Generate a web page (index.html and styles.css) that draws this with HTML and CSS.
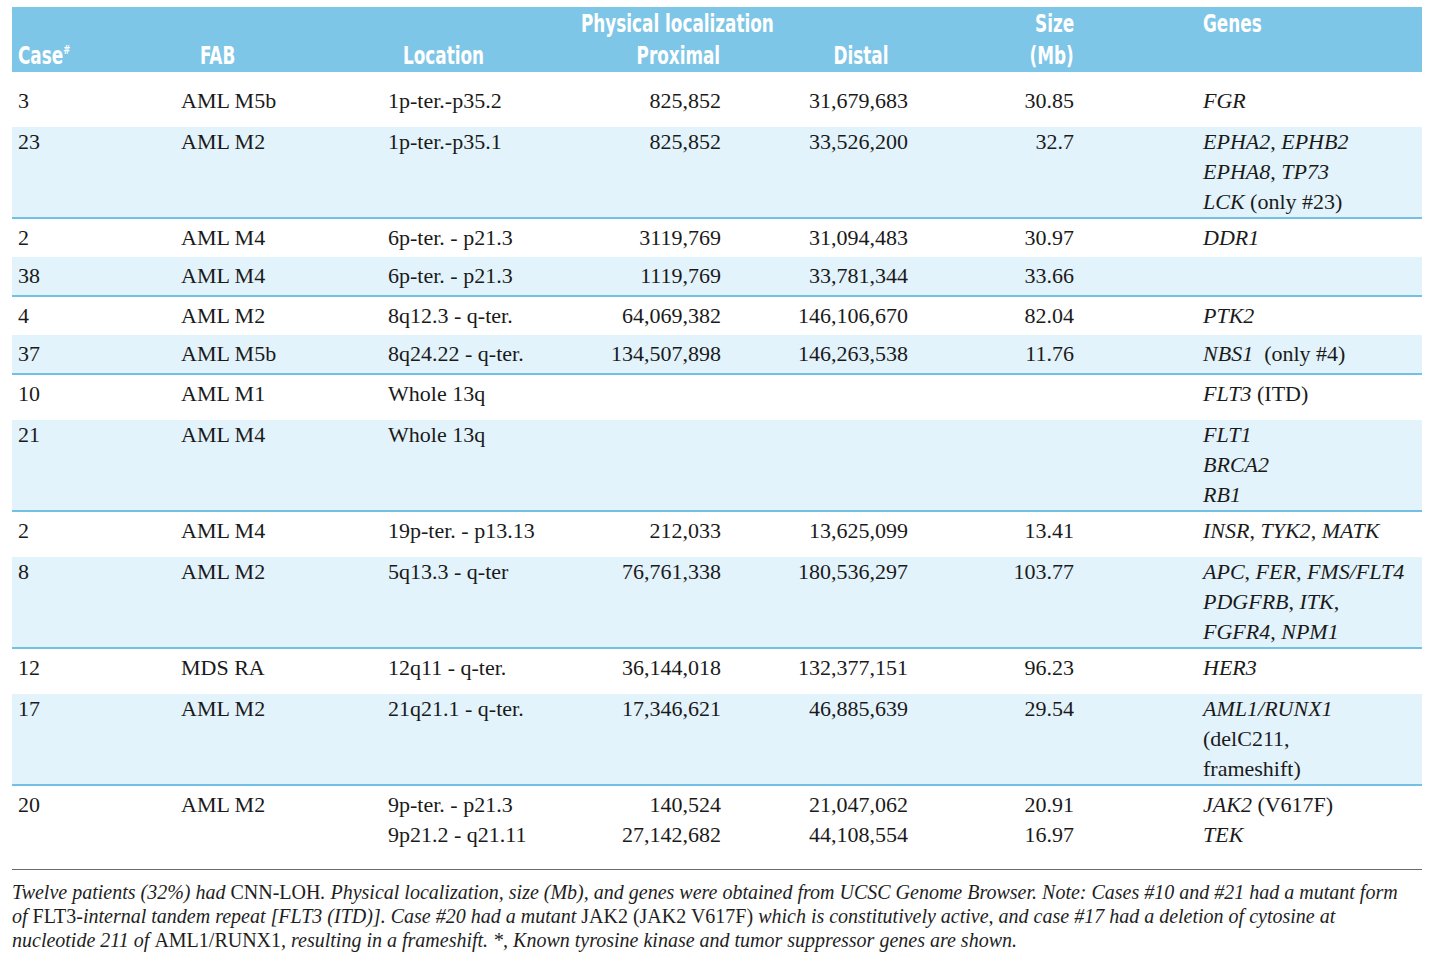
FILE: index.html
```html
<!DOCTYPE html>
<html lang="en">
<head>
<meta charset="utf-8">
<title>CNN-LOH table</title>
<link rel="stylesheet" href="styles.css">
</head>
<body>
<div class="page">
<table class="data">
  <colgroup>
    <col class="c-case"><col class="c-fab"><col class="c-loc"><col class="c-prox"><col class="c-dist"><col class="c-size"><col class="c-genes">
  </colgroup>
  <thead>
    <tr class="h1">
      <th></th><th></th><th></th>
      <th colspan="2" class="h-phys"><span class="nl">Physical localization</span></th>
      <th class="h-num"><span class="nr">Size</span></th>
      <th class="h-genes"><span class="nl">Genes</span></th>
    </tr>
    <tr class="h2">
      <th class="h-case"><span class="nl">Case<sup>#</sup></span></th>
      <th class="h-fab"><span class="nl">FAB</span></th>
      <th class="h-loc"><span class="nl">Location</span></th>
      <th class="h-prox"><span class="nr">Proximal</span></th>
      <th class="h-dist"><span class="nr">Distal</span></th>
      <th class="h-num"><span class="nr">(Mb)</span></th>
      <th></th>
    </tr>
  </thead>
  <tbody>
    <tr class="first">
      <td>3</td><td>AML M5b</td><td>1p-ter.-p35.2</td><td class="num">825,852</td><td class="num">31,679,683</td><td class="num">30.85</td><td class="genes"><i>FGR</i></td>
    </tr>
    <tr class="alt tight">
      <td>23</td><td>AML M2</td><td>1p-ter.-p35.1</td><td class="num">825,852</td><td class="num">33,526,200</td><td class="num">32.7</td><td class="genes"><i>EPHA2</i>, <i>EPHB2</i><br><i>EPHA8</i>, <i>TP73</i><br><i>LCK</i> (only #23)</td>
    </tr>
    <tr class="grp">
      <td>2</td><td>AML M4</td><td>6p-ter. - p21.3</td><td class="num">3119,769</td><td class="num">31,094,483</td><td class="num">30.97</td><td class="genes"><i>DDR1</i></td>
    </tr>
    <tr class="alt">
      <td>38</td><td>AML M4</td><td>6p-ter. - p21.3</td><td class="num">1119,769</td><td class="num">33,781,344</td><td class="num">33.66</td><td class="genes"></td>
    </tr>
    <tr class="grp">
      <td>4</td><td>AML M2</td><td>8q12.3 - q-ter.</td><td class="num">64,069,382</td><td class="num">146,106,670</td><td class="num">82.04</td><td class="genes"><i>PTK2</i></td>
    </tr>
    <tr class="alt">
      <td>37</td><td>AML M5b</td><td>8q24.22 - q-ter.</td><td class="num">134,507,898</td><td class="num">146,263,538</td><td class="num">11.76</td><td class="genes"><i>NBS1</i> &nbsp;(only #4)</td>
    </tr>
    <tr class="grp pre">
      <td>10</td><td>AML M1</td><td>Whole 13q</td><td class="num"></td><td class="num"></td><td class="num"></td><td class="genes"><i>FLT3</i> (ITD)</td>
    </tr>
    <tr class="alt tight">
      <td>21</td><td>AML M4</td><td>Whole 13q</td><td class="num"></td><td class="num"></td><td class="num"></td><td class="genes"><i>FLT1</i><br><i>BRCA2</i><br><i>RB1</i></td>
    </tr>
    <tr class="grp pre">
      <td>2</td><td>AML M4</td><td>19p-ter. - p13.13</td><td class="num">212,033</td><td class="num">13,625,099</td><td class="num">13.41</td><td class="genes"><i>INSR</i>, <i>TYK2</i>, <i>MATK</i></td>
    </tr>
    <tr class="alt tight">
      <td>8</td><td>AML M2</td><td>5q13.3 - q-ter</td><td class="num">76,761,338</td><td class="num">180,536,297</td><td class="num">103.77</td><td class="genes"><i>APC</i>, <i>FER</i>, <i>FMS/FLT4</i><br><i>PDGFRB</i>, <i>ITK</i>,<br><i>FGFR4</i>, <i>NPM1</i></td>
    </tr>
    <tr class="grp pre">
      <td>12</td><td>MDS RA</td><td>12q11 - q-ter.</td><td class="num">36,144,018</td><td class="num">132,377,151</td><td class="num">96.23</td><td class="genes"><i>HER3</i></td>
    </tr>
    <tr class="alt tight">
      <td>17</td><td>AML M2</td><td>21q21.1 - q-ter.</td><td class="num">17,346,621</td><td class="num">46,885,639</td><td class="num">29.54</td><td class="genes"><i>AML1/RUNX1</i><br>(delC211,<br>frameshift)</td>
    </tr>
    <tr class="grp last">
      <td>20</td><td>AML M2</td><td>9p-ter. - p21.3<br>9p21.2 - q21.11</td><td class="num">140,524<br>27,142,682</td><td class="num">21,047,062<br>44,108,554</td><td class="num">20.91<br>16.97</td><td class="genes"><i>JAK2</i> (V617F)<br><i>TEK</i></td>
    </tr>
  </tbody>
</table>
<p class="note">Twelve patients (32%) had <span class="up">CNN-LOH</span>. Physical localization, size (Mb), and genes were obtained from UCSC Genome Browser. Note: Cases #10 and #21 had a mutant form<br>of <span class="up">FLT3</span>-internal tandem repeat [FLT3 (ITD)]. Case #20 had a mutant <span class="up">JAK2 (JAK2 V617F)</span> which is constitutively active, and case #17 had a deletion of cytosine at<br>nucleotide 211 of <span class="up">AML1/RUNX1</span>, resulting in a frameshift. *, Known tyrosine kinase and tumor suppressor genes are shown.</p>
</div>
</body>
</html>
```

FILE: styles.css
```css
html, body {
  margin: 0;
  padding: 0;
  background: #ffffff;
}

.page {
  padding: 7px 18px 0 12px;
  width: 1410px;
}

.data {
  width: 1410px;
  border-collapse: collapse;
  table-layout: fixed;
  font-family: "Liberation Serif", "Times New Roman", serif;
  font-size: 22px;
  color: #1a1a1a;
}

.c-case { width: 163px; }
.c-fab { width: 207px; }
.c-loc { width: 178px; }
.c-prox { width: 167px; }
.c-dist { width: 187px; }
.c-size { width: 166px; }
.c-genes { width: 342px; }

thead tr {
  background: #7ec6e7;
}

thead th {
  font-family: "DejaVu Sans Condensed", "Liberation Sans Narrow", "Liberation Sans", sans-serif;
  font-weight: bold;
  font-size: 24px;
  color: #ffffff;
  line-height: 32px;
  height: 32px;
  padding: 0;
  text-align: left;
  white-space: nowrap;
  vertical-align: middle;
}

thead th .nl,
thead th .nr {
  display: inline-block;
  transform: scaleX(0.78);
}

thead th .nl { transform-origin: left center; }
thead th .nr { transform-origin: right center; }

.h1 th { padding-top: 1px; }

.h-case { padding-left: 6px; }
.h-case sup {
  font-size: 12px;
  vertical-align: 10px;
  line-height: 0;
}
.h-fab { padding-left: 25px; }
.h-loc { padding-left: 21px; }
.h-phys { padding-left: 21px; }
.h-prox { text-align: right; padding-right: 7px; }
.h-dist { text-align: right; padding-right: 26px; }
.h-num { text-align: right; padding-right: 6px; }
.h-genes { padding-left: 123px; }

tbody td {
  padding: 4px 0 4px 6px;
  line-height: 30px;
  vertical-align: top;
  white-space: nowrap;
}

tbody td.num {
  text-align: right;
  padding-left: 0;
  padding-right: 6px;
}

tbody td.genes {
  padding-left: 123px;
}

tbody tr.alt {
  background: #e3f3fb;
}

tbody tr.first td {
  padding-top: 14px;
  padding-bottom: 11px;
}

tbody tr.tight td {
  padding-top: 0;
  padding-bottom: 0;
}

tbody tr.grp td {
  border-top: 2px solid #72c1e4;
}

tbody tr.pre td {
  padding-bottom: 11px;
}

tbody tr.last td {
  padding-top: 4px;
  padding-bottom: 19px;
  border-bottom: 1px solid #6b6b6b;
}

.note {
  margin: 10px 0 0 0;
  font-family: "Liberation Serif", "Times New Roman", serif;
  font-style: italic;
  font-size: 20px;
  line-height: 24px;
  color: #1e1e1e;
  white-space: nowrap;
}

.note .up {
  font-style: normal;
}
```
